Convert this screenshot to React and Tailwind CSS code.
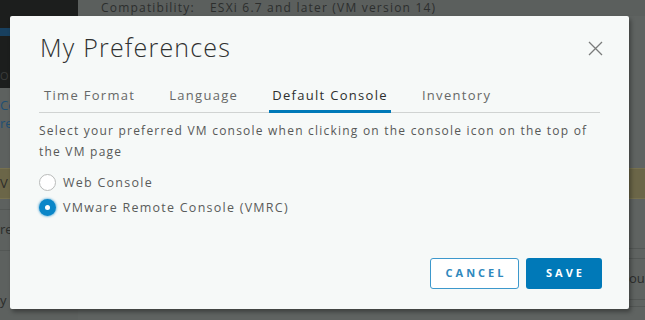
import React, { useState } from 'react';

const tabs = ['Time Format', 'Language', 'Default Console', 'Inventory'];

const App = () => {
  const [activeTab, setActiveTab] = useState('Default Console');
  const [consoleType, setConsoleType] = useState('vmrc');

  return (
    <div
      className="relative w-[645px] h-[320px] overflow-hidden bg-[#5f6361]"
      style={{ fontFamily: '"Open Sans", "Liberation Sans", sans-serif' }}
    >
      {/* Page behind the dimmed overlay */}
      <div className="flex h-full">
        <div className="w-[78px] flex flex-col shrink-0">
          <div className="h-[88px] bg-[#1c1e1d] pt-[28px]">
            <div className="h-[8px] bg-[#18405f]" />
            <div className="mt-[34px] text-[11px] text-[#3a3c3b] leading-none">O</div>
          </div>
          <div className="flex-1 bg-[#5d615f] flex flex-col">
            <div className="mt-[8px] text-[13px] text-[#1f4f73] leading-[18px]">Co</div>
            <div className="text-[13px] text-[#1f4f73] leading-[18px]">re</div>
            <div className="mt-[36px] h-[31px] bg-[#6b6648] border-y border-[#77714f] text-[13px] text-[#2d2d2a] leading-[29px]">V</div>
            <div className="mt-[10px] border-t border-[#535755]" />
            <div className="mt-[10px] text-[13px] text-[#2b2d2c] leading-[18px]">re</div>
            <div className="mt-[12px] border-t border-[#535755]" />
            <div className="mt-[40px] text-[13px] text-[#2b2d2c] leading-[18px]">y</div>
          </div>
        </div>
        <div className="flex-1 flex flex-col">
          <div className="h-[16px] bg-[#5b5f5d] flex items-center pl-[23px] text-[12px] text-[#2c2e2d] tracking-[1.2px]">
            <span className="w-[109px]">Compatibility:</span>
            <span>ESXi 6.7 and later (VM version 14)</span>
          </div>
          <div className="flex-1 flex flex-col items-end">
            <div className="w-[16px] mt-[152px] h-[31px] bg-[#6b6648] border-y border-[#77714f]" />
            <div className="w-[16px] mt-[49px] border-t border-[#535755]" />
            <div className="w-[16px] mt-[9px] border-t border-[#535755]" />
            <div className="w-[16px] mt-[10px] text-[13px] text-[#2b2d2c] leading-[18px] overflow-hidden whitespace-nowrap">ou</div>
            <div className="w-[16px] mt-[12px] border-t border-[#535755]" />
            <div className="w-[16px] mt-[6px] border-t border-[#535755]" />
          </div>
        </div>
      </div>

      {/* Modal */}
      <div className="absolute left-[10px] top-[16px] w-[619px] h-[293px] bg-[#f6f9f8] rounded-[2px] shadow-[2px_3px_4px_rgba(0,0,0,0.35)] px-[29px] flex flex-col">
        <div className="flex items-center justify-between h-[62px] pt-[2px]">
          <h2 className="text-[25px] font-light text-[#2f3130] pl-[1px] tracking-[1.2px]">My Preferences</h2>
          <button className="w-[15px] h-[15px] mr-[-3px] text-[#7a7c7b]">
            <svg viewBox="0 0 15 15" className="w-[15px] h-[15px]" fill="none" stroke="currentColor" strokeWidth="1.3">
              <path d="M1 1 L14 14 M14 1 L1 14" />
            </svg>
          </button>
        </div>

        <div className="flex gap-[28px] border-b border-[#d0d3d2] mt-[4px] pl-[2px]">
          {tabs.map(tab => (
            <button
              key={tab}
              onClick={() => setActiveTab(tab)}
              className={`px-[3px] h-[31px] text-[13px] tracking-[1.3px] border-b-[3px] -mb-px ${
                activeTab === tab
                  ? 'border-[#0079b8] text-[#2d2f2e]'
                  : 'border-transparent text-[#666867]'
              }`}
            >
              {tab}
            </button>
          ))}
        </div>

        <p className="mt-[7px] text-[12px] leading-[21px] text-[#565857] tracking-[1.22px]">
          Select your preferred VM console when clicking on the console icon on the top of
          <br />
          the VM page
        </p>

        <div className="mt-[12px] flex flex-col gap-[8px]">
          {[
            { id: 'web', label: 'Web Console' },
            { id: 'vmrc', label: 'VMware Remote Console (VMRC)' }
          ].map(opt => (
            <label
              key={opt.id}
              className="flex items-center gap-[7px] cursor-pointer"
              onClick={() => setConsoleType(opt.id)}
            >
              {consoleType === opt.id ? (
                <span className="w-[17px] h-[17px] rounded-full bg-[#0a86c8] shadow-[0_0_2px_1px_rgba(10,134,200,0.45)] flex items-center justify-center">
                  <span className="w-[5px] h-[5px] rounded-full bg-white" />
                </span>
              ) : (
                <span className="w-[17px] h-[17px] rounded-full border border-[#b9bbba] bg-white" />
              )}
              <span className="text-[12.5px] text-[#5a5c5b] tracking-[1.25px] leading-[16px]">{opt.label}</span>
            </label>
          ))}
        </div>

        <div className="mt-auto mb-[20px] flex justify-end gap-[7px] mr-[-2px]">
          <button className="w-[89px] h-[31px] rounded-[3px] border border-[#3d98cc] text-[#2f88bd] text-[11px] font-bold tracking-[3px] pl-[3px] bg-white">
            CANCEL
          </button>
          <button className="w-[76px] h-[31px] rounded-[3px] bg-[#0079b8] text-white text-[11px] font-bold tracking-[3px] pl-[3px]">
            SAVE
          </button>
        </div>
      </div>
    </div>
  );
};

export default App;
